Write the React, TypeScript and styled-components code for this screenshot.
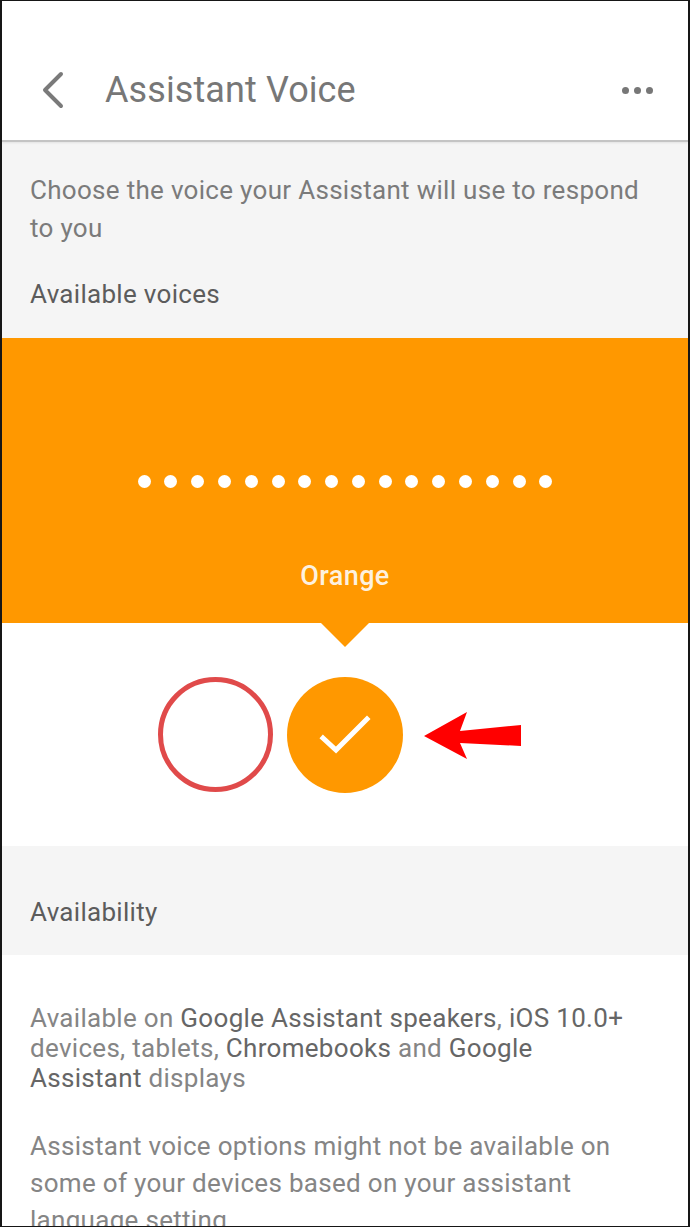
import React from "react";
import styled, { createGlobalStyle } from "styled-components";

const GlobalStyle = createGlobalStyle`
  html, body {
    margin: 0;
    padding: 0;
    background: #ffffff;
  }
  body {
    font-family: Roboto, "Liberation Sans", Arial, sans-serif;
  }
`;

const Frame = styled.div`
  width: 690px;
  height: 1227px;
  box-sizing: border-box;
  border-style: solid;
  border-color: #161616;
  border-width: 1px 2px;
  background: #ffffff;
  overflow: hidden;
  display: flex;
  flex-direction: column;
`;

const Header = styled.header`
  height: 141px;
  box-sizing: border-box;
  flex-shrink: 0;
  display: flex;
  align-items: center;
  padding: 39px 30px 0 36px;
  border-bottom: 2px solid #c4c4c4;
  box-shadow: 0 1px 2px rgba(0, 0, 0, 0.08);
  position: relative;
  z-index: 1;
`;

const BackButton = styled.button`
  border: none;
  background: none;
  padding: 0;
  width: 30px;
  height: 40px;
  display: flex;
  align-items: center;
  justify-content: center;
`;

const Title = styled.h1`
  flex: 1;
  margin: 0 0 0 37px;
  font-size: 36px;
  font-weight: 400;
  color: #777777;
  letter-spacing: 0.1px;
`;

const MoreButton = styled.button`
  border: none;
  background: none;
  padding: 0;
  display: flex;
  gap: 5px;
  margin-right: 5px;
`;

const MoreDot = styled.span`
  width: 7px;
  height: 7px;
  border-radius: 50%;
  background: #777777;
`;

const GraySection = styled.section<{ $top: number; $bottom: number }>`
  background: #f5f5f5;
  padding: ${(p) => p.$top}px 28px ${(p) => p.$bottom}px;
  flex-shrink: 0;
`;

const Intro = styled.p`
  margin: 0 0 28px;
  font-size: 26px;
  line-height: 38px;
  letter-spacing: 0.3px;
  color: #7b7b7b;
`;

const SectionLabel = styled.h2`
  margin: 0;
  font-size: 26px;
  line-height: 38px;
  letter-spacing: 0.3px;
  font-weight: 400;
  color: #5c5c5c;
`;

const Banner = styled.div`
  height: 285px;
  background: #ff9800;
  position: relative;
  display: flex;
  flex-direction: column;
  align-items: center;
  flex-shrink: 0;

  &::after {
    content: "";
    position: absolute;
    left: 50%;
    bottom: -24px;
    transform: translateX(-50%);
    border-left: 24px solid transparent;
    border-right: 24px solid transparent;
    border-top: 24px solid #ff9800;
  }
`;

const Wave = styled.div`
  display: flex;
  gap: 13.8px;
  margin-top: 137px;
`;

const WaveDot = styled.span`
  width: 13px;
  height: 13px;
  border-radius: 50%;
  background: #ffffff;
`;

const VoiceName = styled.div`
  margin-top: 72px;
  font-size: 27px;
  font-weight: 500;
  letter-spacing: 0.4px;
  color: #fdf1df;
`;

const SwatchRow = styled.div`
  height: 223px;
  display: grid;
  grid-template-columns: 1fr 116px 1fr;
  align-items: center;
  column-gap: 14px;
  flex-shrink: 0;
`;

const Swatch = styled.button<{ $color: string; $selected?: boolean }>`
  width: ${(p) => (p.$selected ? 116 : 115)}px;
  height: ${(p) => (p.$selected ? 116 : 115)}px;
  border-radius: 50%;
  box-sizing: border-box;
  padding: 0;
  border: ${(p) => (p.$selected ? "none" : `5px solid ${p.$color}`)};
  background: ${(p) => (p.$selected ? p.$color : "#ffffff")};
  display: flex;
  align-items: center;
  justify-content: center;
  justify-self: end;
`;

const SelectedSwatch = styled(Swatch)`
  justify-self: center;
`;

const Pointer = styled.div`
  justify-self: start;
  margin-left: 7px;
  display: flex;
`;

const Body = styled.div`
  padding: 48px 50px 0 28px;
`;

const Para = styled.p<{ $lh: number }>`
  margin: 0 0 35px;
  font-size: 26px;
  line-height: ${(p) => p.$lh}px;
  letter-spacing: 0.3px;
  color: #858585;

  b {
    font-weight: 400;
    color: #666666;
  }
`;

const DOTS = Array.from({ length: 16 }, (_, i) => i);

export default function App() {
  return (
    <>
      <GlobalStyle />
      <Frame>
        <Header>
          <BackButton aria-label="Back">
            <svg width="26" height="38" viewBox="0 0 26 38">
              <path
                d="M21 3 L5 19 L21 35"
                fill="none"
                stroke="#7a7a7a"
                strokeWidth="4"
                strokeLinecap="round"
                strokeLinejoin="round"
              />
            </svg>
          </BackButton>
          <Title>Assistant Voice</Title>
          <MoreButton aria-label="More">
            <MoreDot />
            <MoreDot />
            <MoreDot />
          </MoreButton>
        </Header>

        <GraySection $top={29} $bottom={25}>
          <Intro>Choose the voice your Assistant will use to respond to you</Intro>
          <SectionLabel>Available voices</SectionLabel>
        </GraySection>

        <Banner>
          <Wave>
            {DOTS.map((i) => (
              <WaveDot key={i} />
            ))}
          </Wave>
          <VoiceName>Orange</VoiceName>
        </Banner>

        <SwatchRow>
          <Swatch $color="#e04a4a" aria-label="Red" />
          <SelectedSwatch $color="#ff9800" $selected aria-label="Orange">
            <svg width="60" height="50" viewBox="0 0 60 50">
              <path
                d="M8 28 L21 40 L52 9"
                fill="none"
                stroke="#ffffff"
                strokeWidth="5"
                strokeLinecap="square"
              />
            </svg>
          </SelectedSwatch>
          <Pointer>
            <svg width="100" height="52" viewBox="0 0 100 52">
              <polygon
                points="0,27 43,3 36,22 97,16 97,37 36,34 43,50"
                fill="#ff0000"
              />
            </svg>
          </Pointer>
        </SwatchRow>

        <GraySection $top={47} $bottom={24}>
          <SectionLabel>Availability</SectionLabel>
        </GraySection>

        <Body>
          <Para $lh={30}>
            Available on <b>Google Assistant speakers</b>, <b>iOS 10.0+</b>{" "}
            devices, tablets, <b>Chromebooks</b> and <b>Google Assistant</b>{" "}
            displays
          </Para>
          <Para $lh={37}>
            Assistant voice options might not be available on some of your
            devices based on your assistant language setting
          </Para>
        </Body>
      </Frame>
    </>
  );
}
